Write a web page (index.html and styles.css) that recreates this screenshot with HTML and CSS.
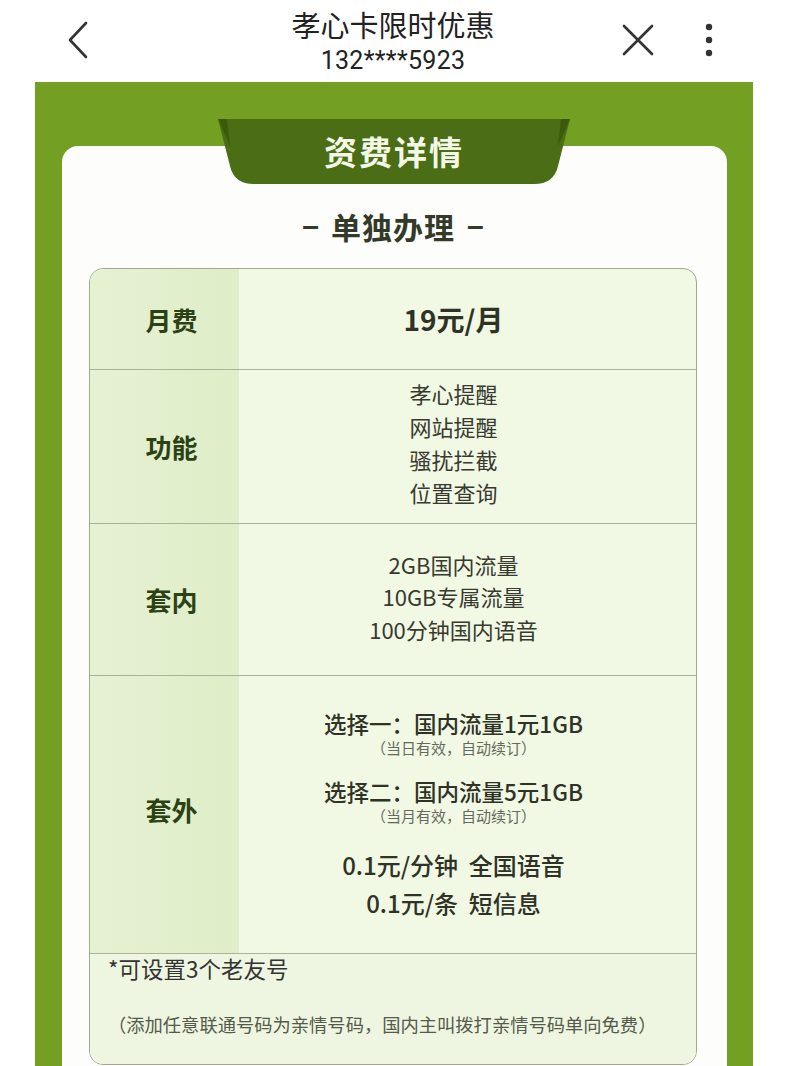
FILE: index.html
```html
<!DOCTYPE html>
<html lang="zh-CN">
<head>
<meta charset="utf-8">
<title>孝心卡限时优惠</title>
<link rel="stylesheet" href="styles.css">
</head>
<body>
<header class="topbar">
  <div class="bar-left">
    <svg class="icon-back" width="24" height="40" viewBox="0 0 24 40"><path d="M20 3 L4 20 L20 37" fill="none" stroke="#333" stroke-width="2.6" stroke-linecap="round" stroke-linejoin="round"/></svg>
  </div>
  <div class="bar-title">
    <div class="title">孝心卡限时优惠</div>
    <div class="subtitle">132****5923</div>
  </div>
  <div class="bar-right">
    <svg class="icon-close" width="34" height="34" viewBox="0 0 34 34"><path d="M3 3 L31 31 M31 3 L3 31" fill="none" stroke="#333" stroke-width="2.6" stroke-linecap="round"/></svg>
    <svg class="icon-more" width="10" height="36" viewBox="0 0 10 36"><circle cx="5" cy="5" r="3.2" fill="#333"/><circle cx="5" cy="18" r="3.2" fill="#333"/><circle cx="5" cy="31" r="3.2" fill="#333"/></svg>
  </div>
</header>

<main class="panel">
  <section class="card">
    <div class="tab">
      <svg class="tab-bg" width="352" height="67" viewBox="0 0 352 67" preserveAspectRatio="none">
        <path d="M0 1 L352 1 L340 48 Q336 66 316 66 L36 66 Q16 66 12 48 Z" fill="#4a6d15"/>
        <path d="M0 1 L9 1 L12 28 Z" fill="#3b5a0c"/>
        <path d="M352 1 L343 1 L340 28 Z" fill="#3b5a0c"/>
      </svg>
      <span class="tab-text">资费详情</span>
    </div>

    <h2 class="section-title"><span class="dash">–</span><span>单独办理</span><span class="dash">–</span></h2>

    <div class="table">
      <div class="row row-fee">
        <div class="label">月费</div>
        <div class="value"><span class="price">19元/月</span></div>
      </div>
      <div class="row row-func">
        <div class="label">功能</div>
        <div class="value lines">
          <span>孝心提醒</span>
          <span>网站提醒</span>
          <span>骚扰拦截</span>
          <span>位置查询</span>
        </div>
      </div>
      <div class="row row-inc">
        <div class="label">套内</div>
        <div class="value lines">
          <span>2GB国内流量</span>
          <span>10GB专属流量</span>
          <span>100分钟国内语音</span>
        </div>
      </div>
      <div class="row row-extra">
        <div class="label">套外</div>
        <div class="value extra">
          <div class="opt">
            <span class="opt-main">选择一：国内流量1元1GB</span>
            <span class="opt-note">（当日有效，自动续订）</span>
          </div>
          <div class="opt">
            <span class="opt-main">选择二：国内流量5元1GB</span>
            <span class="opt-note">（当月有效，自动续订）</span>
          </div>
          <div class="rates">
            <span>0.1元/分钟&nbsp;&nbsp;全国语音</span>
            <span>0.1元/条&nbsp;&nbsp;短信息</span>
          </div>
        </div>
      </div>
      <div class="foot">
        <p class="foot-main">*可设置3个老友号</p>
        <p class="foot-note">（添加任意联通号码为亲情号码，国内主叫拨打亲情号码单向免费）</p>
      </div>
    </div>
  </section>
</main>
</body>
</html>
```

FILE: styles.css
```css
* { box-sizing: border-box; }

html, body {
  margin: 0;
  padding: 0;
}

body {
  width: 800px;
  height: 1066px;
  overflow: hidden;
  background: #ffffff;
  font-family: "Noto Sans CJK SC", "Noto Sans", sans-serif;
  color: #333;
}

.topbar {
  height: 82px;
  display: grid;
  grid-template-columns: 1fr auto 1fr;
  align-items: center;
}

.bar-left {
  padding-left: 66px;
  display: flex;
  align-items: center;
  padding-bottom: 2px;
}

.bar-title {
  text-align: center;
  padding-right: 14px;
}

.title {
  font-size: 29px;
  line-height: 36px;
  color: #222;
}

.subtitle {
  font-family: Roboto, "Liberation Sans", sans-serif;
  font-size: 25px;
  line-height: 30px;
  margin-top: 4px;
  color: #222;
  letter-spacing: 0.3px;
}

.bar-right {
  display: flex;
  justify-content: flex-end;
  align-items: center;
  gap: 49px;
  padding-right: 86px;
  padding-bottom: 2px;
}

.panel {
  margin-left: 35px;
  width: 718px;
  height: 984px;
  background: #73a023;
  padding: 64px 26px 0 27px;
}

.card {
  position: relative;
  height: 100%;
  background: #fdfefb;
  border-radius: 16px 16px 0 0;
  padding: 57px 30px 0 27px;
}

.tab {
  position: absolute;
  top: -28px;
  left: 156px;
  width: 352px;
  height: 67px;
  display: flex;
  align-items: center;
  justify-content: center;
}

.tab-bg {
  position: absolute;
  inset: 0;
}

.tab-text {
  position: relative;
  color: #f3f8e6;
  font-size: 33px;
  font-weight: 700;
  letter-spacing: 2px;
  margin-top: -2px;
}

.section-title {
  margin: 0 0 19px;
  display: flex;
  justify-content: center;
  align-items: center;
  gap: 12px;
  font-size: 30px;
  line-height: 46px;
  font-weight: 700;
  color: #333a2a;
  letter-spacing: 1px;
}

.dash {
  font-family: "Liberation Sans", sans-serif;
  font-size: 30px;
  font-weight: 700;
  letter-spacing: 0;
}

.table {
  border: 1.5px solid #9fab90;
  border-radius: 14px;
  overflow: hidden;
  background: #f1f8e4;
}

.row {
  display: flex;
  border-bottom: 1.5px solid #a8b39a;
}

.label {
  width: 149px;
  flex: none;
  background: linear-gradient(90deg, #e6f1d2, #dfedc8);
  display: flex;
  align-items: center;
  justify-content: center;
  padding-left: 14px;
  font-size: 26px;
  font-weight: 700;
  color: #2c4215;
}

.value {
  flex: 1;
  display: flex;
  flex-direction: column;
  align-items: center;
  justify-content: center;
  padding-right: 28px;
  color: #383a30;
}

.row-fee { height: 101px; }
.row-func { height: 154px; }
.row-inc { height: 152px; }
.row-extra { height: 278px; }

.row-extra .label { padding-bottom: 10px; }

.price {
  font-size: 28px;
  font-weight: 700;
  color: #2f3326;
}

.lines span {
  font-size: 22px;
  line-height: 33px;
}

.row-func .lines { padding-bottom: 8px; }

.row-inc .lines { padding-bottom: 6px; }

.row-inc .lines span {
  line-height: 32.5px;
}

.opt {
  display: flex;
  flex-direction: column;
  align-items: center;
  margin-bottom: 18px;
}

.opt-main {
  font-size: 22.5px;
  line-height: 30px;
  font-weight: 500;
  color: #2f3326;
}

.opt-note {
  font-size: 15px;
  line-height: 20px;
  color: #666a5e;
}

.rates {
  display: flex;
  flex-direction: column;
  align-items: center;
  margin-top: 2px;
}

.rates span {
  font-size: 24px;
  line-height: 38px;
  font-weight: 500;
  color: #2f3326;
}

.foot {
  height: 110px;
  background: #eef6e1;
  padding: 0 18px;
}

.foot p {
  margin: 0;
}

.foot-main {
  font-size: 22.5px;
  line-height: 28px;
  color: #333;
}

.foot-note {
  margin-top: 28px !important;
  font-size: 18.3px;
  line-height: 28px;
  color: #555a4c;
}
```
